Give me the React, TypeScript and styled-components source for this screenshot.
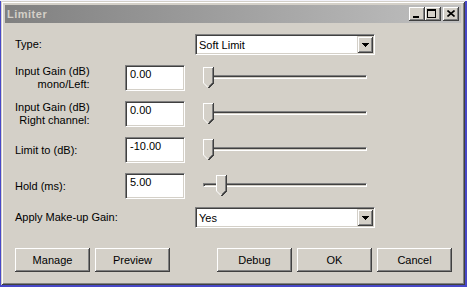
import styled, { createGlobalStyle } from 'styled-components';

const WIN = {
  face: '#d4d0c8',
  light: '#ffffff',
  shadow: '#808080',
  dark: '#404040',
  text: '#000000',
};

const GlobalStyle = createGlobalStyle`
  html, body {
    margin: 0;
    padding: 0;
  }
  body {
    width: 467px;
    height: 287px;
    overflow: hidden;
    background: linear-gradient(#f2f2fa 0 1px, #4848c8 1px);
    font-family: 'Liberation Sans', Arial, sans-serif;
    font-size: 11px;
    color: ${WIN.text};
  }
`;

const sunken = `
  border: 1px solid;
  border-color: ${WIN.shadow} ${WIN.light} ${WIN.light} ${WIN.shadow};
  box-shadow: inset 1px 1px ${WIN.dark}, inset -1px -1px ${WIN.face};
`;

const raised = `
  box-shadow: inset -1px -1px ${WIN.dark}, inset 1px 1px ${WIN.light},
    inset -2px -2px ${WIN.shadow};
`;

const Desktop = styled.div`
  padding: 1px 0 0 1px;
`;

const Window = styled.div`
  box-sizing: border-box;
  width: 464px;
  height: 284px;
  padding: 4px;
  display: flex;
  flex-direction: column;
  background: ${WIN.face};
  box-shadow: inset 1px 1px ${WIN.face}, inset -1px -1px ${WIN.dark},
    inset 2px 2px ${WIN.light}, inset -2px -2px ${WIN.shadow};
`;

const TitleBar = styled.div`
  height: 18px;
  display: flex;
  align-items: center;
  padding: 0 2px;
  background: linear-gradient(90deg, #808080 0%, #c0c0c0 100%);
`;

const Title = styled.span`
  flex: 1;
  color: ${WIN.face};
  font-weight: bold;
  font-size: 11px;
  letter-spacing: 0.5px;
`;

const CaptionButton = styled.span<{ $gap?: number }>`
  box-sizing: border-box;
  width: 16px;
  height: 14px;
  margin-left: ${(p) => p.$gap ?? 0}px;
  position: relative;
  background: ${WIN.face};
  ${raised}
`;

const MinGlyph = styled.span`
  position: absolute;
  left: 4px;
  top: 9px;
  width: 6px;
  height: 2px;
  background: #000;
`;

const MaxGlyph = styled.span`
  position: absolute;
  left: 2px;
  top: 2px;
  width: 9px;
  height: 9px;
  box-sizing: border-box;
  border: 1px solid #000;
  border-top-width: 2px;
`;

const CloseGlyph = styled.svg`
  position: absolute;
  left: 4px;
  top: 3px;
`;

const Content = styled.div`
  flex: 1;
  display: flex;
  flex-direction: column;
  padding: 11px 9px 9px 10px;
`;

const Form = styled.div`
  display: flex;
  flex-direction: column;
`;

const Row = styled.div<{ $height: number; $gap?: number }>`
  display: grid;
  grid-template-columns: 110px 70px 180px;
  height: ${(p) => p.$height}px;
  margin-top: ${(p) => p.$gap ?? 0}px;
  align-items: center;
`;

const Label = styled.span`
  line-height: 13px;
  white-space: nowrap;
`;

const StackedLabel = styled.span`
  display: inline-block;
  justify-self: start;
  text-align: right;
  line-height: 13px;
  white-space: nowrap;
`;

const TextField = styled.div`
  box-sizing: border-box;
  width: 60px;
  height: 26px;
  padding: 2px 4px 0 4px;
  line-height: 13px;
  background: #fff;
  ${sunken}
`;

const Select = styled.div`
  grid-column: 3;
  box-sizing: border-box;
  width: 180px;
  height: 21px;
  display: flex;
  padding: 1px;
  background: #fff;
  ${sunken}
`;

const SelectValue = styled.span`
  flex: 1;
  display: flex;
  align-items: center;
  padding-left: 2px;
`;

const DropButton = styled.span`
  width: 16px;
  display: flex;
  align-items: center;
  justify-content: center;
  background: ${WIN.face};
  box-shadow: inset 1px 1px ${WIN.face}, inset -1px -1px ${WIN.dark},
    inset 2px 2px ${WIN.light}, inset -2px -2px ${WIN.shadow};
`;

const Slider = styled.div`
  position: relative;
  height: 26px;
  align-self: start;
`;

const Track = styled.div`
  box-sizing: border-box;
  margin: 10px 8px 0;
  height: 4px;
  background: ${WIN.face};
  ${sunken}
`;

const Thumb = styled.svg`
  position: absolute;
  top: 2px;
`;

const ButtonBar = styled.div`
  margin-top: auto;
  display: flex;
  gap: 5px;
`;

const Spacer = styled.span`
  flex: 1;
`;

const PushButton = styled.button`
  box-sizing: border-box;
  width: 75px;
  height: 24px;
  margin: 0;
  padding: 0;
  border: none;
  background: ${WIN.face};
  font-family: inherit;
  font-size: 11px;
  color: ${WIN.text};
  ${raised}
`;

const TRACK_WIDTH = 164;
const THUMB_WIDTH = 11;

function TrackBar({ position }: { position: number }) {
  const left = 8 + Math.round(position * (TRACK_WIDTH - THUMB_WIDTH));
  return (
    <Slider>
      <Track />
      <Thumb width="11" height="21" viewBox="0 0 11 21" style={{ left }} shapeRendering="crispEdges">
        <polygon points="0,0 11,0 11,16 5.5,21 0,16" fill={WIN.face} />
        <polyline points="0.5,16 0.5,0.5 10,0.5" fill="none" stroke={WIN.light} />
        <polyline points="0.5,16 5,20.5" fill="none" stroke={WIN.light} shapeRendering="auto" />
        <polyline points="10.5,0 10.5,16 5.5,21" fill="none" stroke={WIN.dark} />
        <polyline points="9.5,1 9.5,15.5 5.5,19.5" fill="none" stroke={WIN.shadow} />
      </Thumb>
    </Slider>
  );
}

function Choice({ value }: { value: string }) {
  return (
    <Select>
      <SelectValue>{value}</SelectValue>
      <DropButton>
        <svg width="7" height="4" viewBox="0 0 7 4" shapeRendering="crispEdges">
          <polygon points="0,0 7,0 3.5,4" fill="#000" />
        </svg>
      </DropButton>
    </Select>
  );
}

const params = [
  { label: ['Input Gain (dB)', 'mono/Left:'], value: '0.00', position: 0 },
  { label: ['Input Gain (dB)', 'Right channel:'], value: '0.00', position: 0 },
  { label: ['Limit to (dB):'], value: '-10.00', position: 0 },
  { label: ['Hold (ms):'], value: '5.00', position: 13 / 153 },
];

export default function App() {
  return (
    <>
      <GlobalStyle />
      <Desktop>
        <Window>
          <TitleBar>
            <Title>Limiter</Title>
            <CaptionButton>
              <MinGlyph />
            </CaptionButton>
            <CaptionButton>
              <MaxGlyph />
            </CaptionButton>
            <CaptionButton $gap={2}>
              <CloseGlyph width="8" height="7" viewBox="0 0 8 7">
                <path d="M0.5 0.5 L7.5 6.5 M7.5 0.5 L0.5 6.5" stroke="#000" strokeWidth="1.6" />
              </CloseGlyph>
            </CaptionButton>
          </TitleBar>
          <Content>
            <Form>
              <Row $height={21}>
                <Label>Type:</Label>
                <Choice value="Soft Limit" />
              </Row>
              {params.map((p, i) => (
                <Row key={i} $height={26} $gap={10}>
                  {p.label.length > 1 ? (
                    <StackedLabel>
                      {p.label[0]}
                      <br />
                      {p.label[1]}
                    </StackedLabel>
                  ) : (
                    <Label>{p.label[0]}</Label>
                  )}
                  <TextField>{p.value}</TextField>
                  <TrackBar position={p.position} />
                </Row>
              ))}
              <Row $height={21} $gap={8}>
                <Label>Apply Make-up Gain:</Label>
                <Choice value="Yes" />
              </Row>
            </Form>
            <ButtonBar>
              <PushButton>Manage</PushButton>
              <PushButton>Preview</PushButton>
              <Spacer />
              <PushButton>Debug</PushButton>
              <PushButton>OK</PushButton>
              <PushButton>Cancel</PushButton>
            </ButtonBar>
          </Content>
        </Window>
      </Desktop>
    </>
  );
}
